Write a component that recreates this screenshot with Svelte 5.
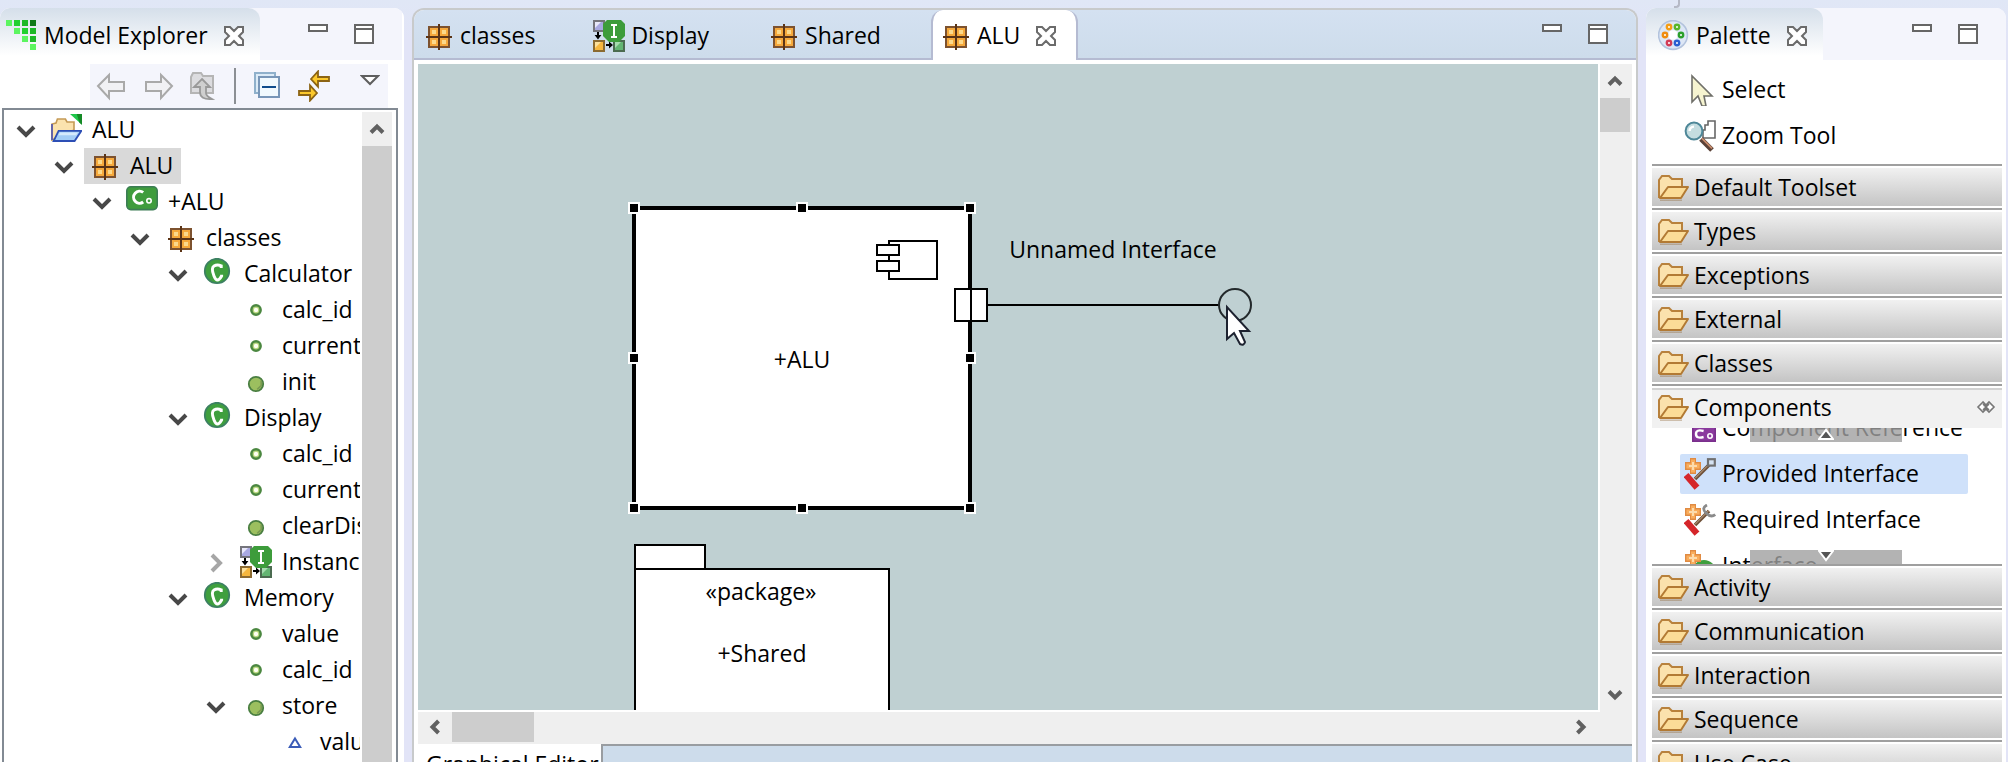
<script>
  const tree = [
    { level: 0, icon: 'project', label: 'ALU', toggle: 'open' },
    { level: 1, icon: 'package', label: 'ALU', toggle: 'open', selected: true },
    { level: 2, icon: 'component', label: '+ALU', toggle: 'open' },
    { level: 3, icon: 'package', label: 'classes', toggle: 'open' },
    { level: 4, icon: 'class', label: 'Calculator', toggle: 'open' },
    { level: 5, icon: 'field', label: 'calc_id' },
    { level: 5, icon: 'field', label: 'current_' },
    { level: 5, icon: 'method', label: 'init' },
    { level: 4, icon: 'class', label: 'Display', toggle: 'open' },
    { level: 5, icon: 'field', label: 'calc_id' },
    { level: 5, icon: 'field', label: 'current_' },
    { level: 5, icon: 'method', label: 'clearDis' },
    { level: 5, icon: 'instance', label: 'Instance', toggle: 'closed' },
    { level: 4, icon: 'class', label: 'Memory', toggle: 'open' },
    { level: 5, icon: 'field', label: 'value' },
    { level: 5, icon: 'field', label: 'calc_id' },
    { level: 5, icon: 'method', label: 'store', toggle: 'open' },
    { level: 6, icon: 'triangle', label: 'value' }
  ];

  const editors = [
    { icon: 'package', label: 'classes' },
    { icon: 'instance', label: 'Display' },
    { icon: 'package', label: 'Shared' }
  ];

  const drawersAbove = ['Default Toolset', 'Types', 'Exceptions', 'External', 'Classes'];
  const drawersBelow = ['Activity', 'Communication', 'Interaction', 'Sequence', 'Use Case'];

  const componentTools = [
    { icon: 'reference', label: 'Component Reference' },
    { icon: 'provided', label: 'Provided Interface', active: true },
    { icon: 'required', label: 'Required Interface' },
    { icon: 'interface', label: 'Interface' }
  ];

  const handles = [
    [210, 138], [378, 138], [546, 138],
    [210, 288], [546, 288],
    [210, 438], [378, 438], [546, 438]
  ];
</script>

{#snippet plus()}
  <path d="M3 0h3v2h2.500v4h-2.500v2h-3v-2h-2.500v-4h2.500z" fill="#e08b43" />
  <path d="M3.500 .7h2v2h2.300v2.600h-2.300v2h-2v-2h-2.300v-2.600h2.300z" fill="#f9ad5c" />
  <path d="M4 2h1v1.500h1.500v1h-1.500v1.500h-1v-1.500h-1.500v-1h1.500z" fill="#fcdcae" />
{/snippet}

{#snippet icon(name)}
  <svg class="icon" viewBox="0 0 16 16" aria-hidden="true">
    {#if name === 'package'}
      <rect x="3" y="3" width="11" height="11" fill="#7d522f" />
      <path d="M4 4h4v4h-4zM9 4h4v4h-4zM4 9h4v4h-4zM9 9h4v4h-4z" fill="#f6a93c" />
      <path d="M5 5h2v2h-2zM10 5h2v2h-2zM5 10h2v2h-2zM10 10h2v2h-2z" fill="#fcd98b" />
      <path d="M8 2h1v13h-1zM2 8h13v1h-13z" fill="#5b3416" />
    {:else if name === 'project'}
      <path d="M1 13V5l2-.5.7-2h4l.8 1.5h3.5v4z" fill="#fbe3ae" stroke="#c59a55" stroke-width=".8" />
      <path d="M.5 5h1v8h-1z" fill="#6565a8" />
      <path d="M4.3 8.4h11.400l-3.400 5.100H1.800z" fill="#a3cdf6" stroke="#2d4fb5" stroke-width=".9" />
      <path d="M5 9.200h9l-1 1.400H4.200z" fill="#d5eafc" />
      <path d="M10 0h6v5.400z" fill="#1fc64a" /><path d="M13.400 0H16v5.400l-1.300-1z" fill="#158a26" />
    {:else if name === 'component'}
      <rect x=".4" y=".4" width="15.200" height="11.400" rx="2" fill="#3f9c3d" stroke="#3c7d55" stroke-width=".8" />
      <path d="M8.600 3.200A3 3 0 1 0 8.600 8" fill="none" stroke="#fff" stroke-width="1.500" />
      <circle cx="11.500" cy="7.400" r="1.100" fill="none" stroke="#fff" stroke-width=".8" />
    {:else if name === 'reference'}
      <rect x="4.400" y="4.400" width="11.200" height="10.200" fill="#8b3a9e" stroke="#7a2f8c" stroke-width=".8" />
      <path d="M9.800 9.500Q6 8.500 6 11Q6 13.500 9.800 12.500" fill="none" stroke="#fff" stroke-width="1.200" />
      <circle cx="13" cy="12" r="1.100" fill="none" stroke="#fff" stroke-width=".8" />
    {:else if name === 'class'}
      <circle cx="7.500" cy="6.500" r="6.100" fill="#3f9f3e" stroke="#3c8062" stroke-width=".9" />
      <path d="M9.600 5V3.900Q7.600 3 6 4T6 9T9.800 9V8.400" fill="none" stroke="#fff" stroke-width="1.500" />
    {:else if name === 'field'}
      <circle cx="8" cy="8" r="2.200" fill="#fff" stroke="#4b8740" stroke-width="1.500" />
      <circle cx="8" cy="8" r="1.400" fill="#fffff2" stroke="#b5d67c" stroke-width=".6" />
    {:else if name === 'method'}
      <circle cx="8" cy="9" r="3.600" fill="#9cbf5f" stroke="#4a7f42" stroke-width=".9" />
      <path d="M10.600 7.300v2.500l-2 1.900" fill="none" stroke="#7a9a52" stroke-width=".8" />
    {:else if name === 'instance'}
      <rect x=".5" y=".5" width="5" height="5" fill="#a9a9e2" stroke="#75757c" />
      <path d="M1 1h3l-3 3z" fill="#e8e8fa" />
      <rect x=".5" y="10.500" width="5" height="5" fill="#f6b73e" stroke="#8b6a30" />
      <path d="M1 11h3l-3 3z" fill="#fce09a" />
      <rect x="10.500" y="10.500" width="5" height="5" fill="#63b572" stroke="#4b6b50" />
      <path d="M11 11h3l-3 3z" fill="#a5dcae" />
      <path d="M2 6h1v1.500h1.200l-1.700 2.300l-1.700 -2.300h1.200zM6.500 12h1.500v-1.300l2 1.800l-2 1.800v-1.300h-1.500z" fill="#000" />
      <path d="M7 0h7l2 2v6l-3 3h-5l-3 -3v-6z" fill="#3d9c3b" />
      <path d="M9 2h3v1h-1v5h1v1h-3v-1h1v-5h-1z" fill="#fff" />
    {:else if name === 'triangle'}
      <path d="M8.500 6.200l2.600 4.300h-5.200z" fill="#fff" stroke="#3b5cb8" />
    {:else if name === 'select'}
      <path d="M4 1v13l3-3 2 5h2l-1-5h4z" fill="#f6f4d0" stroke="#70706a" stroke-width=".8" />
    {:else if name === 'zoom'}
      <path d="M10.500 5V2.500h1.500V.5H15.500V9H9.500V5z" fill="#fff" stroke="#666" stroke-width=".8" />
      <path d="M8.500 9.500l5.500 5.500" stroke="#5b4238" stroke-width="2.600" />
      <path d="M9 9.200l5 5" stroke="#c98c6c" stroke-width=".9" />
      <circle cx="5" cy="5.500" r="4.200" fill="#c5dde0" stroke="#4e8798" />
      <path d="M2.800 5.500q0-2 2.200-2.200" fill="none" stroke="#fff" stroke-width="1.200" />
    {:else if name === 'provided' || name === 'required'}
      <path d="M5.500 10.500L12.500 3.500" stroke="#6f5038" stroke-width="1.800" />
      <path d="M5.500 10.200L12.300 3.400" stroke="#c8a98a" stroke-width=".5" />
      {#if name === 'provided'}
        <rect x="12" y=".6" width="3.400" height="3.200" fill="#d4e2f2" stroke="#707070" stroke-width="1.100" />
      {:else}
        <path d="M11.500 .5Q8.500 2 11 4.500T15.600 5.300" fill="none" stroke="#8a8a8a" stroke-width="1.400" />
      {/if}
      <path d="M1 8.500L6.500 14.800" stroke="#d5262a" stroke-width="3.200" />
      {@render plus()}
    {:else if name === 'interface'}
      <circle cx="10" cy="11" r="6" fill="#3f9f3e" />
      {@render plus()}
    {:else if name === 'palette'}
      <circle cx="7.500" cy="7.500" r="7.200" fill="#dde7f6" stroke="#b3c3dd" stroke-width=".8" />
      <circle cx="7.500" cy="7.500" r="2.400" fill="#fff" />
      <g fill="#fff" stroke-width="1.200">
        <circle cx="5.500" cy="3.500" r="1.100" stroke="#f59d14" /><circle cx="9.500" cy="3.500" r="1.100" stroke="#58b52a" />
        <circle cx="3.500" cy="7.500" r="1.100" stroke="#f08c10" /><circle cx="11.500" cy="7.500" r="1.100" stroke="#2ba02b" />
        <circle cx="5.500" cy="11.500" r="1.100" stroke="#d33b56" /><circle cx="9.500" cy="11.500" r="1.100" stroke="#2b5fd0" />
      </g>
    {:else if name === 'folder'}
      <path d="M.5 13.500V4.500l1.500-2h3.500l1.500 1.500h5V8" fill="#fbe2ad" stroke="#b8813c" />
      <path d="M1 13.500L5 8h10L11.500 13.500z" fill="#fbdc97" stroke="#b27a34" stroke-linejoin="round" />
      <path d="M1 14.600h11" stroke="#8a5f2a" stroke-opacity=".35" stroke-width=".8" />
    {:else if name === 'explorer'}
      <path d="M0 0h3v3h-3zM4 4h3v3h-3zM8 8h3v3h-3zM12 12h3v3h-3z" fill="#5cf560" />
      <path d="M4 0h3v3h-3zM8 4h3v3h-3z" fill="#22d030" />
      <path d="M8 0h3v3h-3zM12 4h3v3h-3zM12 8h3v3h-3z" fill="#1db827" />
      <path d="M12 0h3v3h-3z" fill="#107a18" />
    {/if}
  </svg>
{/snippet}

{#snippet closeButton(label)}
  <button class="plain close" aria-label={label}>
    <svg width="20" height="20" viewBox="0 0 10 10">
      <path d="M.5 .5h2.500l2 2l2-2h2.500v2.500l-2 2l2 2v2.500h-2.500l-2-2l-2 2h-2.500v-2.500l2-2l-2-2z" fill="#fff" stroke="#6b6b6b" />
    </svg>
  </button>
{/snippet}

{#snippet windowButtons()}
  <div class="window-buttons">
    <button class="plain" aria-label="Minimize">
      <svg width="20" height="20" viewBox="0 0 20 20"><rect x="1" y="1" width="18" height="6" fill="#fff" stroke="#666" stroke-width="2" /></svg>
    </button>
    <button class="plain" aria-label="Maximize">
      <svg width="20" height="20" viewBox="0 0 20 20"><path d="M1 1h18v18H1zM1 5h18" fill="#fff" stroke="#666" stroke-width="2" /></svg>
    </button>
  </div>
{/snippet}

{#snippet arrow(direction)}
  <button class="plain scroll-arrow" aria-label="Scroll {direction}">
    <svg class={direction} width="16" height="16" viewBox="0 0 16 16"><path d="M2 11.500l6-6l6 6" fill="none" stroke="#606060" stroke-width="4" /></svg>
  </button>
{/snippet}

{#snippet drawer(label)}
  <button class="drawer"><span class="drawer-face">{@render icon('folder')}{label}</span></button>
{/snippet}

<div class="workbench">
  <i class="notch"></i>
  <section class="view explorer" aria-label="Model Explorer">
    <header class="view-header">
      <div class="view-tab">
        {@render icon('explorer')}
        <span>Model Explorer</span>
        {@render closeButton('Close Model Explorer')}
      </div>
      {@render windowButtons()}
    </header>
    <div class="toolbar">
      <button class="plain" aria-label="Back">
        <svg width="32" height="32" viewBox="0 0 16 16"><path d="M1 8l5.500-5.500v3.500h7.500v4.500h-7.500v3.500z" fill="#f1f1f4" stroke="#a9a9a9" /></svg>
      </button>
      <button class="plain" aria-label="Forward">
        <svg width="32" height="32" viewBox="0 0 16 16"><path d="M15 8l-5.500-5.500v3.500h-7.500v4.500h7.500v3.500z" fill="#f1f1f4" stroke="#a9a9a9" /></svg>
      </button>
      <button class="plain" aria-label="Up">
        <svg width="32" height="32" viewBox="0 0 16 16">
          <path d="M1.500 11.500v-8l1-2h4l1 1.500h5v8.500z" fill="#dcdcdf" stroke="#b5b5b5" />
          <path d="M7 4.500l4 4h-2v3q0 1.500 3 3q-6 .5-6-3.500v-2.500h-3z" fill="#cfcfcf" stroke="#999" stroke-width=".9" />
        </svg>
      </button>
      <i class="separator"></i>
      <button class="plain" aria-label="Collapse All">
        <svg width="32" height="32" viewBox="0 0 16 16">
          <rect x="1.500" y="1.500" width="10" height="10" fill="#dcebf7" stroke="#8fb0cb" />
          <rect x="3.500" y="3.500" width="10" height="10" fill="#f1f9fe" stroke="#7896b8" />
          <path d="M5 8h7v1h-7z" fill="#0f4c8c" />
        </svg>
      </button>
      <button class="plain" aria-label="Link with Editor">
        <svg width="32" height="32" viewBox="0 0 16 16">
          <path d="M6.500 4.500l3.500-3.800v2.800h5.500v2h-5.500v2.800z" fill="#fbc82c" stroke="#8c6414" stroke-width=".9" />
          <path d="M9.500 11.500l-3.500-3.800v2.800h-5.500v2h5.500v2.800z" fill="#fbc82c" stroke="#8c6414" stroke-width=".9" />
        </svg>
      </button>
      <button class="plain menu" aria-label="View Menu">
        <svg width="20" height="12" viewBox="0 0 20 12"><path d="M2 1h16l-8 8z" fill="#fff" stroke="#5f5f5f" stroke-width="2" /></svg>
      </button>
    </div>
    <div class="tree-frame">
      <ul class="tree" role="tree">
        {#each tree as node}
          <li role="treeitem" aria-selected={node.selected ?? false} style="padding-left: {12 + node.level * 38}px">
            {#if node.toggle}
              <button class="plain toggle" aria-label="Toggle {node.label}">
                <svg class={node.toggle} width="20" height="14" viewBox="0 0 20 14"><path d="M2 3l8 8l8-8" fill="none" stroke-width="4" /></svg>
              </button>
            {:else}
              <span class="toggle"></span>
            {/if}
            <span class="node" class:selected={node.selected}>{@render icon(node.icon)}<span>{node.label}</span></span>
          </li>
        {/each}
      </ul>
      <div class="scrollbar vertical">
        {@render arrow('up')}
        <div class="thumb fill"></div>
      </div>
    </div>
  </section>

  <main class="editor">
    <nav class="editor-tabs">
      {#each editors as editor}
        <button class="tab">{@render icon(editor.icon)}<span>{editor.label}</span></button>
      {/each}
      <div class="tab current">
        {@render icon('package')}<span>ALU</span>
        {@render closeButton('Close ALU')}
      </div>
      {@render windowButtons()}
    </nav>
    <div class="editor-body">
      <svg class="canvas" role="img" aria-label="Component diagram">
        <g fill="#fff" stroke="#000" stroke-width="2">
          <rect x="216" y="144" width="336" height="300" stroke-width="4" />
          <rect x="471" y="177" width="48" height="38" />
          <rect x="459" y="181" width="22" height="10" />
          <rect x="459" y="197" width="22" height="10" />
          <rect x="537" y="225" width="32" height="32" />
          <path d="M553 225v32M569 241h232" />
          <circle cx="817" cy="241" r="16" fill="none" stroke="#23292b" />
          <rect x="217" y="481" width="70" height="24" />
          <rect x="217" y="505" width="254" height="400" />
        </g>
        {#each handles as [x, y]}
          <rect x={x + 1} y={y + 1} width="10" height="10" fill="#000" stroke="#fff" stroke-width="2" />
        {/each}
        <text x="384" y="304" text-anchor="middle">+ALU</text>
        <text x="695" y="194" text-anchor="middle">Unnamed Interface</text>
        <text x="343" y="536" text-anchor="middle">«package»</text>
        <text x="344" y="598" text-anchor="middle">+Shared</text>
        <path d="M809 243v32l7-6l6 11q4 2 5-2l-5-11h9z" fill="#fff" stroke="#1d2230" stroke-width="2" />
      </svg>
      <div class="scrollbar vertical">
        {@render arrow('up')}
        <div class="thumb short"></div>
        <div class="track"></div>
        {@render arrow('down')}
      </div>
      <div class="scrollbar horizontal">
        {@render arrow('left')}
        <div class="thumb"></div>
        <div class="track"></div>
        {@render arrow('right')}
      </div>
    </div>
    <footer class="page-tabs">
      <button class="page-tab">Graphical Editor</button>
      <div class="page-rest"></div>
    </footer>
  </main>

  <section class="view palette" aria-label="Palette">
    <header class="view-header">
      <div class="view-tab">
        {@render icon('palette')}
        <span>Palette</span>
        {@render closeButton('Close Palette')}
      </div>
      {@render windowButtons()}
    </header>
    <div class="tools basic">
      <button class="tool">{@render icon('select')}<span>Select</span></button>
      <button class="tool">{@render icon('zoom')}<span>Zoom Tool</span></button>
    </div>
    {#each drawersAbove as label}{@render drawer(label)}{/each}
    <button class="drawer open">
      <span class="drawer-face">
        {@render icon('folder')}Components
        <svg class="pin" width="20" height="16" viewBox="0 0 10 8"><path d="M3.500 1.500L1 4l2.500 2.500L5 5l1.500 1.500L9 4L6.500 1.500L5 3zM3.500 2.500L5 4L3.500 5.500M6.500 2.500L5 4l1.500 1.500" fill="#fff" stroke="#777" stroke-width=".8" /></svg>
      </span>
    </button>
    <div class="drawer-list">
      <div class="tools scrolled">
        {#each componentTools as tool}
          <button class="tool" class:active={tool.active}>{@render icon(tool.icon)}<span>{tool.label}</span></button>
        {/each}
      </div>
      <button class="nudge top" aria-label="Scroll tools up">
        <svg width="16" height="12" viewBox="0 0 16 12"><path d="M1 11l7-9l7 9z" fill="#555" stroke="#fff" stroke-width="2" /></svg>
      </button>
      <button class="nudge bottom" aria-label="Scroll tools down">
        <svg width="16" height="12" viewBox="0 0 16 12"><path d="M1 1h14l-7 9z" fill="#555" stroke="#fff" stroke-width="2" /></svg>
      </button>
    </div>
    {#each drawersBelow as label}{@render drawer(label)}{/each}
  </section>
</div>

<style>
  :global(body) {
    overflow: hidden;
  }

  .workbench {
    position: relative;
    display: grid;
    grid-template-columns: 404px minmax(0, 1fr) 360px;
    gap: 8px;
    box-sizing: border-box;
    height: 100vh;
    padding: 8px 2px 0 0;
    overflow: hidden;
    background: linear-gradient(#e0e7f6, #e2e4f7 40px);
    color: #000;
    font: 23px/32px "Open Sans", "Noto Sans", sans-serif;
    white-space: nowrap;
  }

  .notch {
    position: absolute;
    top: 0;
    right: 328px;
    width: 4px;
    height: 6px;
    border: solid #b5b9c6;
    border-width: 0 2px 2px 0;
    border-radius: 0 0 4px 0;
  }

  button {
    padding: 0;
    border: 0;
    background: none;
    color: inherit;
    font: inherit;
  }

  .plain {
    display: flex;
  }

  svg {
    display: block;
    flex: none;
  }

  .icon {
    width: 32px;
    height: 32px;
  }

  .view {
    display: flex;
    flex-direction: column;
    min-height: 0;
    overflow: hidden;
    border-radius: 10px 10px 0 0;
    background: #fff;
  }

  .view-header {
    display: flex;
    flex: none;
    justify-content: space-between;
    height: 52px;
    background: #f4f5fc;
  }

  .explorer .view-header {
    border-right: 2px solid #fff;
  }

  .view-tab {
    display: flex;
    align-items: center;
    gap: 6px;
    padding: 4px 16px 0 6px;
    box-sizing: border-box;
    border-radius: 0 12px 0 0;
    background: linear-gradient(#d5dfea, #fff 48px);
  }

  .palette .view-tab {
    padding-left: 12px;
  }

  .view-tab > span,
  .tab > span {
    padding-bottom: 2px;
  }

  .close {
    margin-left: 10px;
  }

  .window-buttons {
    display: flex;
    gap: 26px;
    padding: 16px 28px 0 0;
    margin-left: auto;
  }

  .window-buttons button {
    height: 20px;
  }

  .toolbar {
    display: flex;
    flex: none;
    align-items: center;
    gap: 14px;
    height: 44px;
    margin: 4px 16px 0 90px;
    padding: 0 8px 0 6px;
    box-sizing: border-box;
    background: #f4f5fc;
  }

  .separator {
    width: 2px;
    height: 36px;
    margin-right: 2px;
    background: #8b8f94;
  }

  .menu {
    margin: 0 0 10px auto;
  }

  .tree-frame {
    display: flex;
    flex: 1;
    min-height: 0;
    margin: 0 6px 0 2px;
    padding: 2px 4px 0 0;
    border: solid #828a93;
    border-width: 2px 2px 0 2px;
  }

  .tree {
    flex: 1;
    min-width: 0;
    margin: 0 2px 0 0;
    padding: 0;
    overflow: hidden;
    list-style: none;
  }

  .tree li {
    display: flex;
    align-items: center;
    height: 36px;
  }

  .toggle {
    flex: none;
    width: 30px;
    padding-top: 2px;
  }

  .toggle .open {
    stroke: #484848;
  }

  .toggle .closed {
    stroke: #a6a6a6;
    transform: rotate(-90deg);
  }

  .node {
    display: flex;
    align-items: center;
    gap: 10px;
    height: 36px;
    padding: 0 8px 0 4px;
  }

  .node > span {
    padding-bottom: 2px;
  }

  .selected {
    background: #d9d9d9;
  }

  .scrollbar {
    display: flex;
    background: #efefef;
  }

  .vertical {
    flex-direction: column;
    width: 30px;
  }

  .scroll-arrow {
    flex: none;
    align-items: center;
    justify-content: center;
    width: 30px;
    height: 34px;
  }

  .horizontal .scroll-arrow {
    width: 34px;
    height: 30px;
  }

  .down {
    transform: rotate(180deg);
  }

  .left {
    transform: rotate(-90deg);
  }

  .right {
    transform: rotate(90deg);
  }

  .thumb {
    background: #cdcdcd;
  }

  .fill,
  .track {
    flex: 1;
  }

  .short {
    height: 34px;
  }

  .horizontal .thumb {
    width: 82px;
    height: 30px;
  }

  .editor {
    display: flex;
    flex-direction: column;
    min-width: 0;
    min-height: 0;
    border: solid #c8cacb;
    border-width: 2px 2px 0 2px;
    border-radius: 12px 12px 0 0;
    background: #fff;
    overflow: hidden;
  }

  .editor-tabs {
    display: flex;
    flex: none;
    height: 50px;
    box-sizing: border-box;
    border-bottom: 2px solid #b5bbd2;
    background: linear-gradient(#d4e1f1, #cddceb);
  }

  .editor-tabs .window-buttons {
    padding-top: 14px;
  }

  .tab {
    display: flex;
    align-items: center;
    gap: 6px;
    height: 50px;
    box-sizing: border-box;
    padding: 2px 50px 0 8px;
  }

  .current {
    padding: 2px 20px 0 6px;
    border: solid #b5bbd2;
    border-width: 0 2px;
    border-radius: 12px 12px 0 0;
    background: #fff;
  }

  .editor-body {
    display: grid;
    flex: 1;
    grid-template: minmax(0, 1fr) 32px / minmax(0, 1fr) 32px;
    gap: 2px;
    min-height: 0;
    margin: 4px 4px 0;
  }

  .canvas {
    width: 100%;
    height: 100%;
    background: #bfd0d2;
  }

  .editor-body .vertical {
    width: 32px;
    margin-bottom: -2px;
  }

  .horizontal {
    grid-column: 1 / 3;
    padding-right: 34px;
  }

  .editor-body .thumb {
    flex: none;
  }

  .editor-body .short {
    width: 30px;
  }

  .page-tabs {
    display: flex;
    flex: none;
    height: 18px;
    margin: 0 4px;
    overflow: hidden;
  }

  .page-tab {
    height: 40px;
    padding: 0 2px 0 8px;
    background: #fff;
  }

  .page-rest {
    flex: 1;
    border: solid #999da1;
    border-width: 2px 0 0 2px;
    background: #cddceb;
  }

  .tools {
    display: flex;
    flex-direction: column;
    gap: 6px;
    padding: 0 38px 0 34px;
  }

  .basic {
    padding-top: 10px;
    padding-bottom: 8px;
  }

  .tool {
    display: flex;
    flex: none;
    align-items: center;
    gap: 6px;
    height: 40px;
    padding: 0 4px;
    border-radius: 2px;
  }

  .tool > span {
    padding-bottom: 2px;
  }

  .active {
    background: #cfe1fa;
  }

  .drawer {
    display: block;
    flex: none;
    margin: 0 4px 0 6px;
    padding: 2px 0;
    border-top: 2px solid #9f9f9f;
  }

  .drawer-face {
    display: flex;
    align-items: center;
    gap: 4px;
    height: 38px;
    padding: 0 6px;
    background: linear-gradient(#f1f1f1, #c4c4c4);
  }

  .open.drawer {
    padding-bottom: 0;
  }

  .open .drawer-face {
    height: 34px;
    padding-bottom: 4px;
    border-top: 2px solid #d2d2d2;
    background: #f1f1f1;
  }

  .pin {
    margin-left: auto;
  }

  .drawer-list {
    position: relative;
    flex: none;
    height: 136px;
    overflow: hidden;
  }

  .scrolled {
    margin-top: -20px;
  }

  .nudge {
    position: absolute;
    left: 104px;
    display: flex;
    justify-content: center;
    width: 152px;
    height: 14px;
    background: rgb(160 160 160 / 80%);
  }

  .top {
    top: 0;
  }

  .bottom {
    bottom: 0;
  }
</style>
